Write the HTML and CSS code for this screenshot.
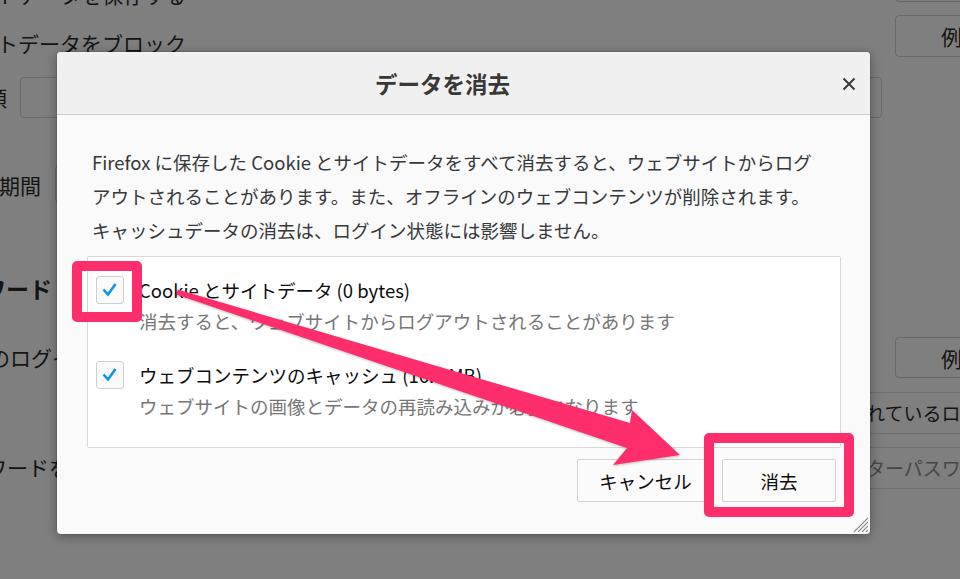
FILE: index.html
```html
<!DOCTYPE html>
<html lang="ja">
<head>
<meta charset="utf-8">
<title>データを消去</title>
<link rel="stylesheet" href="styles.css">
</head>
<body>
<div class="page">
  <div class="row r1">
    <span class="lbl l1">トデータを保存する</span>
    <span class="bbtn b-top"></span>
  </div>
  <div class="row r2">
    <span class="lbl l2">トデータをブロック</span>
    <span class="bbtn b-ex">例外を管理...</span>
  </div>
  <div class="row r3">
    <span class="lbl l3"><span class="cut">類</span></span>
    <span class="binput"></span>
  </div>
  <div class="row r4">
    <span class="lbl l4">期間</span>
    <span class="binput2"></span>
  </div>
  <div class="row r5">
    <span class="lbl head">ワード</span>
  </div>
  <div class="row r6">
    <span class="lbl l6">のログイン</span>
    <span class="bbtn b-ex2">例外サイト...</span>
  </div>
  <div class="row r7">
    <span class="bline">れているログイン情報</span>
  </div>
  <div class="row r8">
    <span class="lbl l8">ワードを</span>
    <span class="bline bbox">ターパスワード</span>
  </div>
</div>

<div class="dialog">
  <div class="dlg-head">
    <h1 class="dlg-title">データを消去</h1>
    <div class="dlg-close">
      <svg width="14" height="14" viewBox="0 0 14 14"><path d="M1.5 1.5 L12.5 12.5 M12.5 1.5 L1.5 12.5" stroke="#3a3a3a" stroke-width="2" fill="none"/></svg>
    </div>
  </div>
  <div class="dlg-body">
    <p class="intro">Firefox に保存した Cookie とサイトデータをすべて消去すると、ウェブサイトからログ<br>アウトされることがあります。また、オフラインのウェブコンテンツが削除されます。<br>キャッシュデータの消去は、ログイン状態には影響しません。</p>
    <div class="group">
      <div class="opt">
        <span class="cb"><svg width="26" height="26" viewBox="0 0 26 26"><polyline points="6.5,12.5 11,17.5 18.5,7" fill="none" stroke="#0a95ee" stroke-width="2.6"/></svg></span>
        <div class="opt-text">
          <div class="opt-title">Cookie とサイトデータ (0 bytes)</div>
          <div class="opt-desc">消去すると、ウェブサイトからログアウトされることがあります</div>
        </div>
      </div>
      <div class="opt">
        <span class="cb"><svg width="26" height="26" viewBox="0 0 26 26"><polyline points="6.5,12.5 11,17.5 18.5,7" fill="none" stroke="#0a95ee" stroke-width="2.6"/></svg></span>
        <div class="opt-text">
          <div class="opt-title">ウェブコンテンツのキャッシュ (16.4 MB)</div>
          <div class="opt-desc">ウェブサイトの画像とデータの再読み込みが必要になります</div>
        </div>
      </div>
    </div>
    <div class="actions">
      <button class="btn btn-cancel">キャンセル</button>
      <button class="btn btn-clear">消去</button>
    </div>
  </div>
  <svg class="grip" width="16" height="16" viewBox="0 0 16 16">
    <path d="M16 2 L2 16 M16 6 L6 16 M16 10 L10 16 M16 14 L14 16" stroke="#8a8a8a" stroke-width="1.1" fill="none"/>
  </svg>
</div>

<svg class="annot" width="960" height="579" viewBox="0 0 960 579">
  <rect x="77" y="266" width="60" height="51" fill="none" stroke="#fe2d6c" stroke-width="10" stroke-linejoin="round"/>
  <rect x="709" y="438" width="140" height="74" fill="none" stroke="#fe2d6c" stroke-width="10" stroke-linejoin="round"/>
  <polygon class="arrow" points="177.8,289.6 630,423 632,410 680,455 613,465 627,448 176.2,294.4" fill="#fe2d6c"/>
</svg>
</body>
</html>
```

FILE: styles.css
```css
* { box-sizing: border-box; }
html, body { margin: 0; padding: 0; }
body {
  width: 960px;
  height: 579px;
  overflow: hidden;
  position: relative;
  background: #7f7f7f;
  font-family: "Noto Sans CJK JP", "Noto Sans", sans-serif;
  color: #141414;
}

/* dimmed background page */
.page { display: flex; flex-direction: column; margin-top: -14px; }
.row { display: flex; align-items: flex-start; flex: none; }
.lbl { font-size: 21px; line-height: 28px; white-space: nowrap; color: #141414; }
.r1 { height: 28px; }
.l1 { margin-left: -3px; margin-top: -6px; }
.b-top { height: 16px; }
.r2 { height: 56px; }
.l2 { margin-left: -3px; margin-top: 15px; }
.bbtn {
  margin-left: auto;
  margin-right: -30px;
  width: 95px;
  border: 1px solid rgba(0, 0, 0, 0.18);
  border-radius: 4px;
  font-size: 21px;
  line-height: 40px;
  padding-left: 45px;
  white-space: nowrap;
  overflow: hidden;
  color: #141414;
}
.b-ex { margin-top: 1px; height: 42px; }
.r3 { height: 55px; }
.l3 { width: 20px; overflow: hidden; margin-top: 13px; }
.cut { display: inline-block; margin-left: -14px; }
.binput {
  margin-top: 7px;
  width: 862px;
  height: 41px;
  border: 1px solid rgba(0, 0, 0, 0.16);
  border-radius: 4px;
}
.r4 { height: 92px; }
.l4 { margin-left: -1px; margin-top: 46px; }
.binput2 {
  margin-top: 40px;
  margin-left: 14px;
  width: 200px;
  height: 38px;
  border: 1px solid rgba(0, 0, 0, 0.16);
  border-radius: 4px;
}
.r5 { height: 100px; }
.head { font-size: 23px; font-weight: 700; margin-left: -17px; margin-top: 57px; }
.r6 { height: 75px; }
.l6 { margin-left: -11px; margin-top: 26px; }
.b-ex2 { margin-top: 20px; height: 41px; }
.r7 { height: 55px; }
.bline {
  margin-left: auto;
  width: 98px;
  height: 42px;
  border-top: 1px solid rgba(0, 0, 0, 0.14);
  border-bottom: 1px solid rgba(0, 0, 0, 0.14);
  font-size: 19px;
  line-height: 40px;
  padding-left: 4px;
  white-space: nowrap;
  overflow: hidden;
  color: #141414;
}
.r8 { height: 70px; }
.l8 { margin-left: -14px; margin-top: 6px; }
.bbox { color: #474747; }

/* dialog */
.dialog {
  position: absolute;
  left: 57px;
  top: 52px;
  width: 813px;
  height: 482px;
  background: #fafafa;
  border-radius: 4px;
  box-shadow: 0 2px 12px rgba(0, 0, 0, 0.35), 0 0 0 1px rgba(0, 0, 0, 0.08);
  display: flex;
  flex-direction: column;
  overflow: hidden;
}
.dlg-head {
  height: 63px;
  flex: none;
  display: flex;
  align-items: center;
  background: #f0f0f0;
  border-bottom: 1px solid #cdcdcd;
}
.dlg-title {
  flex: 1;
  margin: 0;
  text-align: center;
  font-size: 22.5px;
  font-weight: 700;
  color: #383838;
  line-height: 30px;
}
.dlg-close {
  width: 42px;
  display: flex;
  justify-content: center;
  align-items: center;
  padding-top: 1px;
}
.dlg-close svg { display: block; }
.dlg-body {
  flex: 1;
  display: flex;
  flex-direction: column;
  padding: 30px 29px 0 30px;
}
.intro {
  margin: 0;
  padding-left: 5px;
  font-size: 18.5px;
  line-height: 34px;
  color: #37383a;
  white-space: nowrap;
}
.group {
  margin-top: 9px;
  background: #ffffff;
  border: 1px solid #d9d9d9;
  border-radius: 2px;
  padding: 19px 8px 26px;
}
.opt { display: flex; gap: 15px; align-items: flex-start; }
.opt + .opt { margin-top: 25px; }
.cb {
  flex: none;
  width: 28px;
  height: 28px;
  border: 1px solid #cfcfcf;
  border-radius: 3px;
  background: #fafafa;
  display: flex;
  align-items: center;
  justify-content: center;
}
.cb svg { display: block; }
.opt-title {
  font-size: 18.5px;
  line-height: 29px;
  color: #0c0c0d;
  white-space: nowrap;
}
.opt-desc {
  margin-top: 2px;
  font-size: 18.5px;
  line-height: 29px;
  color: #767676;
  white-space: nowrap;
}
.actions {
  display: flex;
  justify-content: flex-end;
  gap: 8px;
  margin-top: 11px;
  padding-right: 5px;
}
.btn {
  height: 43px;
  border: 1px solid #d2d2d2;
  border-radius: 2px;
  background: #fbfbfb;
  font-family: inherit;
  font-size: 18.5px;
  color: #0c0c0d;
  padding: 0;
}
.btn-cancel { width: 137px; }
.btn-clear { width: 114px; }
.grip { position: absolute; right: 2px; bottom: 2px; }

/* annotations */
.annot { position: absolute; left: 0; top: 0; pointer-events: none; }
.arrow { filter: drop-shadow(0 1px 1px rgba(0, 0, 0, 0.25)); }
```
